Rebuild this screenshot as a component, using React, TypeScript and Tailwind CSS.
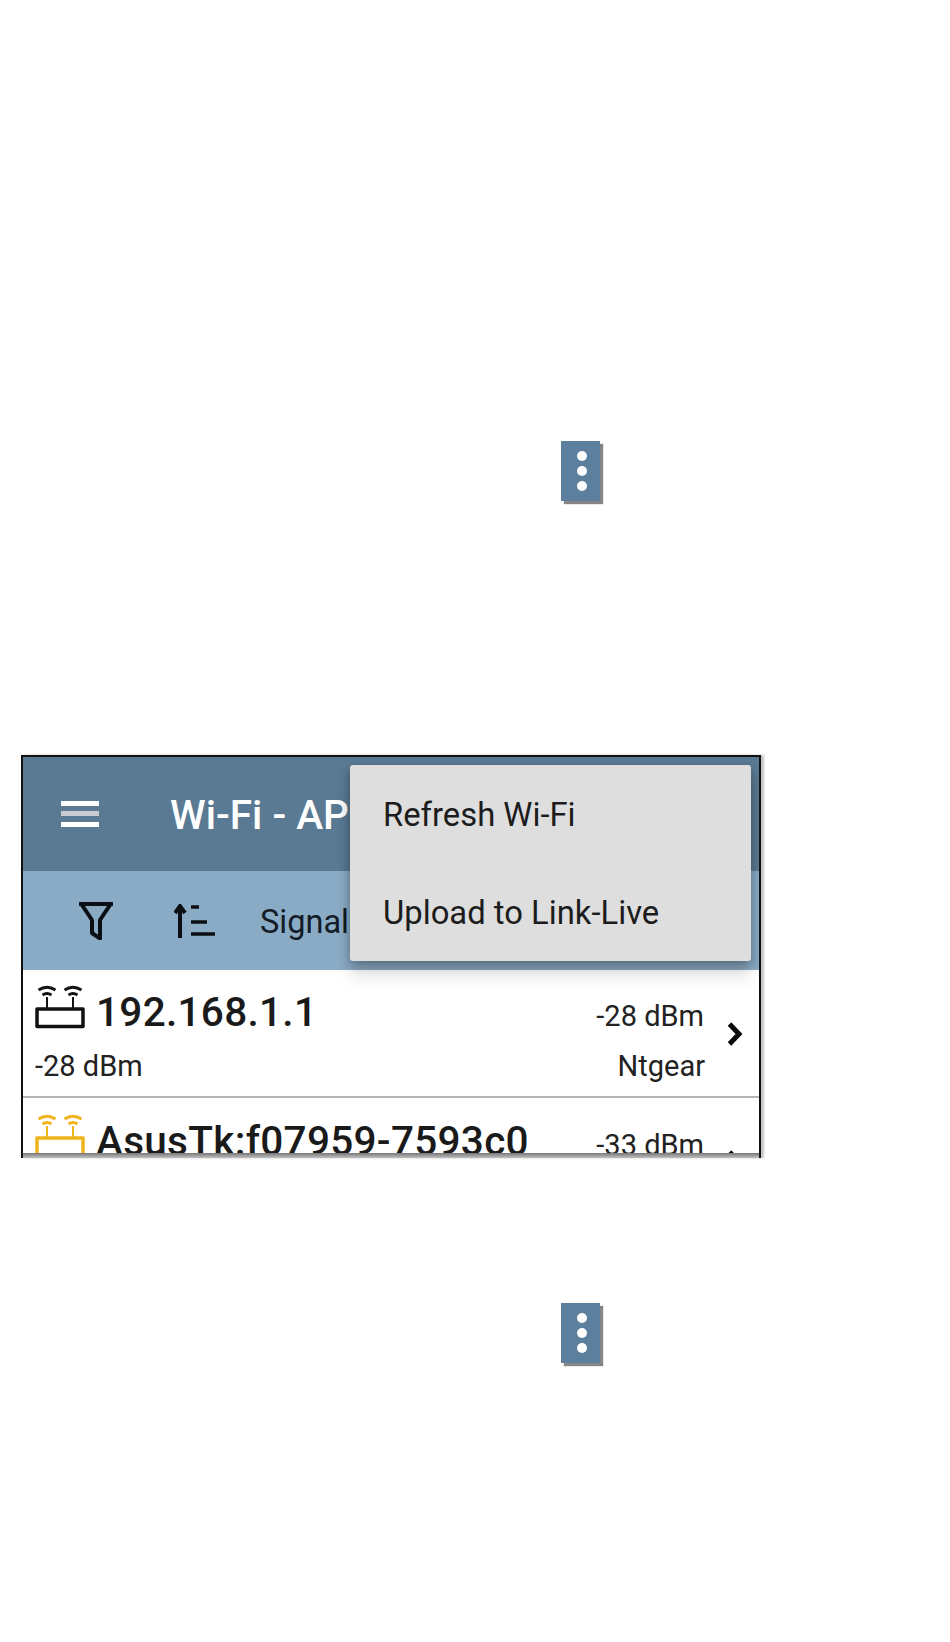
import { type FC } from 'react';

const font = { fontFamily: 'Roboto, sans-serif' };

const MoreButton: FC<{ className?: string }> = ({ className = '' }) => (
  <div
    className={`flex h-[60px] w-[39px] flex-col items-center justify-center gap-[5px] bg-[#5b7f9c] pl-[2px] shadow-[3px_3px_1px_#858585] ${className}`}
  >
    <span className="h-[10px] w-[10px] rounded-full bg-white" />
    <span className="h-[10px] w-[10px] rounded-full bg-white" />
    <span className="h-[10px] w-[10px] rounded-full bg-white" />
  </div>
);

const RouterIcon: FC<{ color: string }> = ({ color }) => (
  <svg width="50" height="44" viewBox="0 0 50 44" fill="none" stroke={color} className="mt-[15px] shrink-0">
    <path d="M2 24V41.500H48V24H2Z" strokeWidth="3.500" strokeLinejoin="round" />
    <path d="M12 12V24M38 12V24" strokeWidth="2" />
    <path d="M3.500 5Q12 -0.500 20.500 5M7.500 10Q12 7 16.500 10M29.500 5Q38 -0.500 46.500 5M33.500 10Q38 7 42.500 10" strokeWidth="2.800" />
  </svg>
);

const Row: FC<{
  name: string;
  left: string;
  signal: string;
  vendor: string;
  color: string;
  divider?: boolean;
  className?: string;
}> = ({ name, left, signal, vendor, color, divider, className = '' }) => (
  <div className={`relative h-[128px] w-full shrink-0 pl-[12px] pr-[14px] ${divider ? 'border-b-2 border-[#b4b4b4]' : ''} ${className}`}>
    <div className="flex h-[70px] items-start">
      <RouterIcon color={color} />
      <span className="ml-[11px] mt-[14px] text-[40.500px] font-medium leading-[56px] tracking-[0.3px] text-[#1a1a1a]">{name}</span>
      <span className="ml-auto mr-[41px] mt-[26px] text-[29px] leading-[40px] text-[#222222]">{signal}</span>
    </div>
    <div className="mt-[6px] flex text-[29px] leading-[40px] text-[#222222]">
      <span>{left}</span>
      <span className="ml-auto mr-[40px]">{vendor}</span>
    </div>
    <svg width="16" height="24" viewBox="0 0 16 24" fill="none" stroke="#0a0a0a" strokeWidth="5" className="absolute right-[16px] top-[52px]">
      <path d="M2.500 2L12 12L2.500 22" />
    </svg>
  </div>
);

export default function App() {
  return (
    <div className="h-[1642px] w-[950px] overflow-hidden bg-white pt-[441px]" style={font}>
      <MoreButton className="ml-[561px]" />

      <div className="relative ml-[21px] mt-[254px] h-[403px] w-[740px] border-x-2 border-t-2 border-x-[#111111] border-t-[#111111] shadow-[3px_0_2px_#c4c4c4]">
        <div className="relative h-full w-full overflow-hidden">
          <div className="flex h-[114px] items-center bg-[#5a7a94] pl-[38px]">
            <svg width="38" height="26" viewBox="0 0 38 26" className="shrink-0">
              <rect x="0" y="0" width="38" height="5" fill="#ffffff" />
              <rect x="0" y="10" width="38" height="5" fill="#c8ced3" />
              <rect x="0" y="21" width="38" height="5" fill="#ffffff" />
            </svg>
            <span className="ml-[71px] mt-[2px] text-[40.500px] font-medium text-white">Wi-Fi - AP</span>
          </div>

          <div className="flex h-[99px] items-center bg-[#8aabc6] pl-[56px]">
            <svg width="34" height="38" viewBox="0 0 34 38" fill="none" stroke="#0c0f14" className="shrink-0">
              <path d="M0 2H34" strokeWidth="4" />
              <path d="M3 3L13 18V31L21 36.500V18L31 3" strokeWidth="4" strokeLinejoin="round" />
            </svg>
            <svg width="42" height="34" viewBox="0 0 42 34" fill="none" stroke="#0c0f14" className="ml-[61px] shrink-0">
              <path d="M6 34V4M1 9L6 2L11 9" strokeWidth="4" />
              <path d="M17 3H25M17 18H33M17 30H41" strokeWidth="3.500" />
            </svg>
            <span className="ml-[44px] mt-[3px] text-[32.500px] text-[#141c26]">Signal</span>
          </div>

          <Row name="192.168.1.1" left="-28 dBm" signal="-28 dBm" vendor="Ntgear" color="#111111" divider />
          <Row name="AsusTk:f07959-7593c0" left="" signal="-33 dBm" vendor="" color="#efb41d" className="pt-[1px]" />

          <div className="absolute bottom-0 left-0 right-0 h-[5px] bg-gradient-to-b from-[#777777] to-[#c0c0c0]" />

          <div className="absolute left-[327px] top-[8px] w-[401px] rounded-[3px] bg-[#dedede] text-[32.800px] text-[#1c1c1c] shadow-[0_4px_12px_rgba(0,0,0,0.34),0_18px_16px_rgba(0,0,0,0.08)]">
            <div className="flex h-[98px] items-center pl-[33px] pt-[3px]">Refresh Wi-Fi</div>
            <div className="flex h-[98px] items-center pl-[33px] pt-[3px]">Upload to Link-Live</div>
          </div>
        </div>
      </div>

      <MoreButton className="ml-[561px] mt-[145px]" />
    </div>
  );
}
